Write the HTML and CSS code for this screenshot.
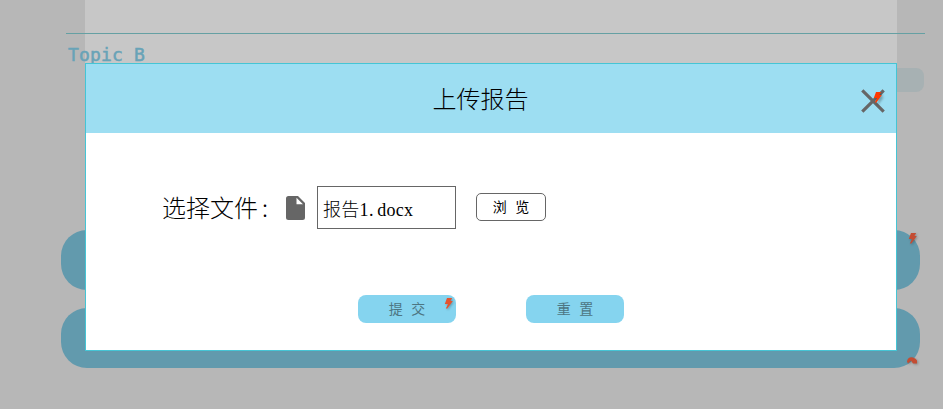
FILE: index.html
```
<!DOCTYPE html>
<html lang="zh-CN">
<head>
<meta charset="utf-8">
<title>上传报告</title>
<link rel="stylesheet" href="styles.css">
</head>
<body>
<main class="page">
  <header class="topic">
    <h2 class="topic-name">Topic B</h2>
    <span class="topic-chip"></span>
  </header>
  <section class="topic-list">
    <div class="topic-card"><svg class="mark mark-top" viewBox="0 0 9 12"><path d="M3 1H8.2L6.4 4H8.8L3.4 11.4H1.8L4 7H.8Z"/></svg></div>
    <div class="topic-card"><svg class="mark mark-bottom" viewBox="0 0 10 8"><path d="M0 5Q1 0 6 1Q9 2 10 4V7H6L4 4 1 7Z"/></svg></div>
  </section>
</main>
<section class="dialog" role="dialog">
  <header class="dialog-head">
    <h1 class="dialog-title">上传报告</h1>
    <button class="close" type="button">
      <svg class="cross" viewBox="0 0 24 24"><path d="M1.3 1.3 22.7 22.7M22.7 1.3 1.3 22.7"/></svg>
      <svg class="close-mark" viewBox="0 0 9 12"><path d="M3 1H8.2L6.4 4H8.8L3.4 11.4H1.8L4 7H.8Z"/></svg>
    </button>
  </header>
  <div class="file-row">
    <span class="file-label">选择文件<span class="colon">:</span></span>
    <svg class="file-icon" viewBox="0 0 19 24"><path fill-rule="evenodd" d="M2.5 0H12L19 7V21.5Q19 24 16.5 24H2.5Q0 24 0 21.5V2.5Q0 0 2.5 0ZM10.5 1.8V8.3H17Z"/></svg>
    <div class="file-name">报告1<span class="dot">.</span>docx</div>
    <button class="browse" type="button">浏&nbsp;览</button>
  </div>
  <div class="actions">
    <button class="action" type="button">提&nbsp;交<svg class="mark action-mark" viewBox="0 0 9 12"><path d="M3 1H8.2L6.4 4H8.8L3.4 11.4H1.8L4 7H.8Z"/></svg></button>
    <button class="action" type="button">重&nbsp;置</button>
  </div>
</section>
</body>
</html>
```
FILE: styles.css
```
* { box-sizing: border-box; }
body {
  margin: 0;
  height: 409px;
  overflow: hidden;
  background: #b7b7b7;
  font-family: "Liberation Sans", "Noto Sans CJK SC", sans-serif;
}
button { font: inherit; padding: 0; border: 0; background: none; }
.page {
  padding: 33px 18px 0 61px;
  background: linear-gradient(#c7c7c7, #c7c7c7) 85px 0 / 812px 64px no-repeat;
}
.topic {
  display: flex;
  justify-content: space-between;
  height: 197px;
  margin-left: 5px;
  padding: 0 1px 0 2px;
  background: linear-gradient(#65a0a3, #65a0a3) 0 0 / 100% 1px no-repeat;
}
.topic-name {
  margin: 10px 0 0;
  font: 400 18px/24px "DejaVu Sans Mono", monospace;
  -webkit-text-stroke: 0.5px #68a3b7;
  letter-spacing: 0.16px;
  color: #68a3b7;
}
.topic-chip {
  width: 80px;
  height: 24px;
  margin-top: 35px;
  border-radius: 8px;
  background: #a7b1b3;
}
.topic-list { display: flex; flex-direction: column; gap: 18px; margin-right: 5px; }
.topic-card {
  position: relative;
  height: 60px;
  border-radius: 26px;
  background: #629aad;
}
.mark {
  position: absolute;
  width: 9px;
  height: 12px;
  fill: #c44c32;
  filter: drop-shadow(1px 1px 1px #0004);
}
.mark-top { top: 2px; right: 3px; }
.mark-bottom { right: 3px; bottom: 3px; width: 10px; height: 9px; }
.dialog {
  position: absolute;
  left: 85px;
  top: 63px;
  width: 812px;
  height: 288px;
  border: 1px solid #45c5d5;
  background: #fff;
  color: #000;
}
.dialog-head {
  display: grid;
  grid-template-columns: 1fr auto 1fr;
  align-items: center;
  height: 69px;
  padding-right: 11px;
  background: #9ddef2;
}
.dialog-title {
  grid-column: 2;
  margin: -2px 0 0;
  transform: translateX(-5px);
  font: 300 24px/36px "Noto Sans CJK SC", sans-serif;
}
.close { position: relative; justify-self: end; width: 24px; height: 24px; margin-top: 5px; }
.cross { display: block; width: 24px; height: 24px; fill: none; stroke: #666; stroke-width: 3.2; }
.close-mark {
  position: absolute;
  left: 12px;
  top: 2px;
  width: 9px;
  height: 12px;
  fill: #ff3900;
  filter: drop-shadow(2px 2px 1px #0004);
}
.file-row { display: flex; align-items: center; height: 43px; margin: 53px 0 0 76px; }
.file-label {
  width: 124px;
  margin-top: -2px;
  white-space: nowrap;
  font: 300 24px/36px "Noto Sans CJK SC", sans-serif;
}
.colon { margin-left: 4px; }
.file-icon { width: 19px; height: 24px; fill: #666; }
.file-name {
  width: 139px;
  height: 43px;
  margin-left: 12px;
  padding: 2px 0 0 5px;
  border: 1px solid #666;
  font: 300 18px/42px "Liberation Serif", "Noto Sans CJK SC", serif;
  letter-spacing: 0.2px;
}
.dot { margin: 0 3.5px 0 0.5px; }
.browse {
  width: 70px;
  height: 28px;
  margin: -2px 0 0 20px;
  padding-top: 2px;
  border: 1px solid #666;
  border-radius: 5px;
  color: #000;
}
.browse, .action { font: 400 14px/20px "Liberation Mono", "Noto Sans CJK SC", monospace; }
.actions { display: flex; gap: 70px; margin: 66px 0 0 272px; }
.action {
  position: relative;
  width: 98px;
  height: 28px;
  padding-top: 2px;
  border-radius: 8px;
  background: #85d4ef;
  color: #4d7683;
}
.action-mark { top: 2px; right: 3px; fill: #e4532f; }
```
